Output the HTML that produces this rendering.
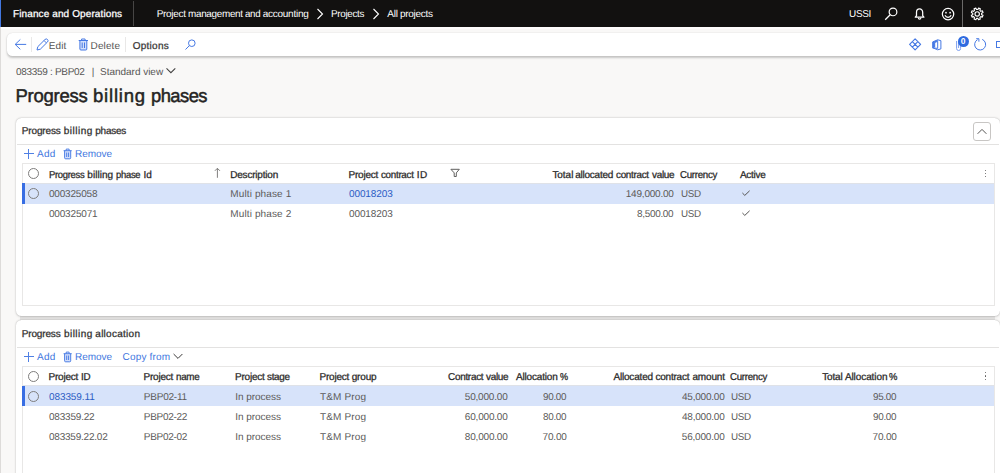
<!DOCTYPE html>
<html><head><meta charset="utf-8"><title>Progress billing phases</title>
<style>
html,body{margin:0;padding:0;}
body{text-rendering:geometricPrecision;width:1000px;height:473px;overflow:hidden;position:relative;background:#f9f8f7;font-family:"Liberation Sans",sans-serif;}
.a{position:absolute;}
.t{position:absolute;white-space:pre;}
svg{position:absolute;overflow:visible;}
.card{position:absolute;background:#fff;border-radius:5.500px;box-sizing:border-box;box-shadow:0 0 1.500px rgba(0,0,0,.20),0 .5px 2.500px rgba(0,0,0,.14);}
.grid{position:absolute;background:#fff;border:1px solid #e8e7e6;box-sizing:border-box;}
.sel{position:absolute;background:#d7e3fa;}
.hl{position:absolute;background:#e3e2e1;height:1px;}
.radio{position:absolute;width:11px;height:11px;border:1px solid #7e7d7c;border-radius:50%;box-sizing:border-box;}
</style></head><body>
<!-- left strip -->
<div class="a" style="left:0;top:27px;width:1.300px;height:446px;background:#dddbd9"></div>
<!-- top bar -->
<div class="a" style="left:0;top:0;width:1000px;height:27px;background:#121110"></div>
<div class="a" style="left:0;top:0;width:1.400px;height:26.500px;background:#4277e0"></div>
<div class="a" style="left:133px;top:1px;width:1px;height:25px;background:#474645"></div>
<div class="a" style="left:962px;top:0;width:1px;height:27px;background:#6b6a69"></div>
<!-- breadcrumb chevrons -->
<svg style="left:316px;top:8px" width="8" height="12" viewBox="0 0 8 12"><path d="M1.5 1 L6.5 6 L1.5 11" fill="none" stroke="#fff" stroke-width="1.1"/></svg>
<svg style="left:372px;top:8px" width="8" height="12" viewBox="0 0 8 12"><path d="M1.5 1 L6.5 6 L1.5 11" fill="none" stroke="#fff" stroke-width="1.1"/></svg>
<!-- top right icons -->
<svg style="left:884px;top:7px" width="14" height="14" viewBox="0 0 14 14"><circle cx="9" cy="4.900" r="3.850" fill="none" stroke="#fff" stroke-width="1.200"/><path d="M6.200 7.700 L1.200 12.700" stroke="#fff" stroke-width="1.250" fill="none"/></svg>
<svg style="left:914px;top:7px" width="12" height="14" viewBox="0 0 12 14"><path d="M1.300 10.200 L2.500 8.700 V5.400 A3.100 3.500 0 0 1 8.700 5.400 V8.700 L9.900 10.200 Z" fill="none" stroke="#fff" stroke-width="1.250" stroke-linejoin="round"/><path d="M4.300 10.800 a1.300 1.300 0 0 0 2.600 0" fill="none" stroke="#fff" stroke-width="1.100"/></svg>
<svg style="left:941px;top:7px" width="14" height="14" viewBox="0 0 14 14"><circle cx="7.050" cy="7.100" r="5.700" fill="none" stroke="#fff" stroke-width="1.250"/><circle cx="5" cy="5.700" r=".85" fill="#fff"/><circle cx="9.100" cy="5.700" r=".85" fill="#fff"/><path d="M4 8.300 A3.300 3.300 0 0 0 10.100 8.300" fill="none" stroke="#fff" stroke-width="1.150"/></svg>
<svg style="left:970px;top:7px" width="14" height="14" viewBox="0 0 14 14"><path d="M13.03 8.35 L12.32 10.08 L10.84 9.60 L9.85 10.59 L10.33 12.07 L8.60 12.78 L7.90 11.39 L6.50 11.39 L5.80 12.78 L4.07 12.07 L4.55 10.59 L3.56 9.60 L2.08 10.08 L1.37 8.35 L2.76 7.65 L2.76 6.25 L1.37 5.55 L2.08 3.82 L3.56 4.30 L4.55 3.31 L4.07 1.83 L5.80 1.12 L6.50 2.51 L7.90 2.51 L8.60 1.12 L10.33 1.83 L9.85 3.31 L10.84 4.30 L12.32 3.82 L13.03 5.55 L11.64 6.25 L11.64 7.65 Z" fill="none" stroke="#fff" stroke-width="1.150" stroke-linejoin="round"/><circle cx="7.200" cy="6.950" r="2.200" fill="none" stroke="#fff" stroke-width="1.150"/></svg>

<!-- action toolbar -->
<div class="a" style="left:1.300px;top:27px;width:999px;height:1.500px;background:rgba(255,255,255,.75)"></div>
<div class="a" style="left:7.300px;top:32.800px;width:1010px;height:23.600px;background:#fff;border-radius:5.500px;box-shadow:0 1.300px 2.200px rgba(0,0,0,.20),0 0 1.500px rgba(0,0,0,.10)"></div>
<div class="a" style="left:31px;top:37px;width:1px;height:15px;background:#e9e8e7"></div>
<div class="a" style="left:125px;top:37px;width:1px;height:15px;background:#e9e8e7"></div>
<!-- back arrow -->
<svg style="left:14px;top:39px" width="14" height="12" viewBox="0 0 14 12"><path d="M12.200 5.400 H1.200 M6.300 0.500 L1.200 5.400 L6.300 10.300" fill="none" stroke="#4679e4" stroke-width="1"/></svg>
<!-- pencil -->
<svg style="left:36px;top:38px" width="13" height="13" viewBox="0 0 13 13"><path d="M1 12 L1.800 8.700 L9 1.500 A1.300 1.300 0 0 1 11.500 4 L4.300 11.200 Z M8 2.500 L10.500 5" fill="none" stroke="#4679e4" stroke-width="1"/></svg>
<!-- trash -->
<svg style="left:78px;top:38px" width="11" height="13" viewBox="0 0 11 13"><path d="M1.900 2.500 V11 a1 1 0 0 0 1 1 H7.800 a1 1 0 0 0 1 -1 V2.500 Z" fill="#d3dffb" stroke="none"/><path d="M0.700 2.500 H10 M3.600 2.500 V1 H7.100 V2.500 M1.900 2.500 V11 a1 1 0 0 0 1 1 H7.800 a1 1 0 0 0 1 -1 V2.500 M4.200 4.500 V10 M6.500 4.500 V10" fill="none" stroke="#4679e4" stroke-width="1"/></svg>
<!-- search small -->
<svg style="left:185px;top:39px" width="11" height="11" viewBox="0 0 11 11"><circle cx="6.800" cy="4.200" r="3.300" fill="none" stroke="#4679e4" stroke-width="1"/><path d="M4.400 6.600 L0.500 10.500" stroke="#4679e4" stroke-width="1" fill="none"/></svg>
<!-- right toolbar icons -->
<svg style="left:909px;top:38px" width="12" height="12" viewBox="0 0 12 12"><g transform="translate(0.1 0.4)"><path d="M6 .5 L11.500 6 L6 11.500 L.5 6 Z M3.250 3.250 L8.750 8.750 M8.750 3.250 L3.250 8.750" fill="none" stroke="#4679e4" stroke-width="1.150" stroke-linejoin="round"/></g></svg>
<svg style="left:932px;top:39px" width="10" height="11" viewBox="0 0 10 11"><g transform="translate(0.1 0.3)"><path d="M.6 2.600 L5.600 .5 L8.800 1.400 V9.600 L5.600 10.500 L.6 8.500 L5.600 9.100 V2 L2.600 3.200 V7.600 L.6 8.500 Z" fill="none" stroke="#4679e4" stroke-width="1" stroke-linejoin="round"/><path d="M.6 2.600 L5.600 .5 V2 L2.600 3.200 V7.600 L.6 8.500 Z" fill="#4679e4"/></g></svg>
<svg style="left:955px;top:39px" width="8" height="13" viewBox="0 0 8 13"><path d="M1.600 2 V9.500 A2 2 0 0 0 5.600 9.500 V2.500 M3.600 3 V9 " fill="none" stroke="#7d9fee" stroke-width="1"/></svg>
<div class="a" style="left:957.500px;top:36px;width:11px;height:11px;border-radius:50%;background:#2f6be0"></div>
<div class="t" style="left:960.700px;top:37px;font-size:8.500px;line-height:9px;color:#fff;font-weight:700">0</div>
<svg style="left:974px;top:38px" width="13" height="13" viewBox="0 0 13 13"><path d="M8.21 1.40 A5.5 5.5 0 1 1 3.57 1.64" fill="none" stroke="#4679e4" stroke-width="1"/><path d="M2.200 .7 H4.900 V3.700" fill="none" stroke="#4679e4" stroke-width="1"/></svg>
<div class="a" style="left:996px;top:41.300px;width:8px;height:6.800px;border:1.200px solid #4679e4;box-sizing:border-box"></div>

<!-- standard view chevron -->
<svg style="left:165px;top:67px" width="10" height="7" viewBox="0 0 10 7"><g transform="translate(0.9 0.4)"><path d="M.6 1 L5 5.300 L9.400 1" fill="none" stroke="#424140" stroke-width="1.050"/></g></svg>

<!-- CARD 1 -->
<div class="a" style="left:20px;top:314px;width:975px;height:8px;background:#e6e5e4"></div>
<div class="card" style="left:15.500px;top:118px;width:984.200px;height:198.200px"></div>
<div class="hl" style="left:17px;top:144px;width:982px"></div>
<div class="a" style="left:973px;top:122px;width:18px;height:19px;border:1px solid #c8c6c4;border-radius:3px;box-sizing:border-box;background:#fff"></div>
<svg style="left:977px;top:128px" width="10" height="7" viewBox="0 0 10 7"><path d="M.6 5.800 L5 1.400 L9.400 5.800" fill="none" stroke="#555453" stroke-width="1"/></svg>
<!-- card1 toolbar icons -->
<div class="a" style="left:28px;top:148.500px;width:1px;height:10px;background:#5080e4"></div><div class="a" style="left:23.500px;top:153px;width:10px;height:1px;background:#5080e4"></div>
<svg style="left:63px;top:148px" width="10" height="12" viewBox="0 0 10 12"><path d="M1.600 2.700 V9.800 a1 1 0 0 0 1 1 H6.700 a1 1 0 0 0 1 -1 V2.700 Z" fill="#d3dffb" stroke="none"/><path d="M0.600 2.700 H8.700 M3.200 2.700 V1.100 H6.100 V2.700 M1.600 2.700 V9.800 a1 1 0 0 0 1 1 H6.700 a1 1 0 0 0 1 -1 V2.700 M3.700 4.500 V9 M5.600 4.500 V9" fill="none" stroke="#4679e4" stroke-width=".95"/></svg>
<div class="grid" style="left:22px;top:163px;width:973px;height:143px"></div>
<div class="sel" style="left:23px;top:183.600px;width:971px;height:20.200px"></div><div class="a" style="left:23px;top:183px;width:971px;height:1.100px;background:#dfe2e8"></div>
<div class="a" style="left:22.300px;top:183.400px;width:2.400px;height:20.400px;background:#376de3"></div>
<div class="radio" style="left:28px;top:168px"></div>
<div class="radio" style="left:28px;top:188px"></div>
<!-- sort arrow -->
<svg style="left:0;top:0" width="1" height="1"><path d="M217.400 168.300 V177.800 M214.900 170.800 L217.400 168.300 L219.900 170.800" fill="none" stroke="#807f7e" stroke-width="1"/></svg>
<!-- filter -->
<svg style="left:0;top:0" width="1" height="1"><path d="M450.900 169.300 H459.300 L456.300 172.900 V176.500 H454.200 V172.900 Z" fill="none" stroke="#605f5e" stroke-width="1" stroke-linejoin="round"/></svg>
<!-- dots -->
<div class="a" style="left:985px;top:169.500px;width:1.300px;height:1.300px;background:#555453;border-radius:50%"></div>
<div class="a" style="left:985px;top:172.800px;width:1.300px;height:1.300px;background:#555453;border-radius:50%"></div>
<div class="a" style="left:985px;top:176.100px;width:1.300px;height:1.300px;background:#555453;border-radius:50%"></div>
<!-- checks -->
<svg style="left:742px;top:190px" width="8" height="6" viewBox="0 0 8 6"><path d="M.4 3 L2.800 5.400 L7.600 .8" fill="none" stroke="#555453" stroke-width="1"/></svg>
<svg style="left:742px;top:210px" width="8" height="6" viewBox="0 0 8 6"><path d="M.4 3 L2.800 5.400 L7.600 .8" fill="none" stroke="#555453" stroke-width="1"/></svg>

<!-- CARD 2 -->
<div class="card" style="left:15.500px;top:320.200px;width:984.200px;height:200px"></div>
<div class="hl" style="left:17px;top:347px;width:982px"></div>
<div class="a" style="left:28px;top:351.500px;width:1px;height:10px;background:#5080e4"></div><div class="a" style="left:23.500px;top:356px;width:10px;height:1px;background:#5080e4"></div>
<svg style="left:63px;top:351px" width="10" height="12" viewBox="0 0 10 12"><path d="M1.600 2.700 V9.800 a1 1 0 0 0 1 1 H6.700 a1 1 0 0 0 1 -1 V2.700 Z" fill="#d3dffb" stroke="none"/><path d="M0.600 2.700 H8.700 M3.200 2.700 V1.100 H6.100 V2.700 M1.600 2.700 V9.800 a1 1 0 0 0 1 1 H6.700 a1 1 0 0 0 1 -1 V2.700 M3.700 4.500 V9 M5.600 4.500 V9" fill="none" stroke="#4679e4" stroke-width=".95"/></svg>
<svg style="left:173px;top:353px" width="10" height="7" viewBox="0 0 10 7"><path d="M.6 1 L5 5.400 L9.400 1" fill="none" stroke="#3b3a39" stroke-width="1"/></svg>
<div class="grid" style="left:22px;top:366px;width:973px;height:160px"></div>
<div class="sel" style="left:23px;top:386px;width:971px;height:20.300px"></div><div class="a" style="left:23px;top:385.100px;width:971px;height:1.100px;background:#dfe2e8"></div>
<div class="a" style="left:22.300px;top:385.800px;width:2.400px;height:20.500px;background:#376de3"></div>
<div class="radio" style="left:28px;top:371px"></div>
<div class="radio" style="left:28px;top:391px"></div>
<div class="a" style="left:985px;top:372px;width:1.300px;height:1.300px;background:#555453;border-radius:50%"></div>
<div class="a" style="left:985px;top:375.300px;width:1.300px;height:1.300px;background:#555453;border-radius:50%"></div>
<div class="a" style="left:985px;top:378.600px;width:1.300px;height:1.300px;background:#555453;border-radius:50%"></div>

<span class="t" style="left:13.01px;top:9px;font-size:10px;line-height:12px;letter-spacing:0.111px;color:#ffffff;-webkit-text-stroke:0.28px #ffffff;">Finance and Operations</span>
<span class="t" style="left:156.65px;top:9px;font-size:10px;line-height:12px;letter-spacing:-0.277px;color:#ffffff;">Project</span>
<span class="t" style="left:188.16px;top:9px;font-size:10px;line-height:12px;letter-spacing:-0.3px;color:#ffffff;transform:scaleX(0.9887);transform-origin:0 0;">management</span>
<span class="t" style="left:244.76px;top:9px;font-size:10px;line-height:12px;letter-spacing:-0.3px;color:#ffffff;transform:scaleX(0.9732);transform-origin:0 0;">and</span>
<span class="t" style="left:262.65px;top:9px;font-size:10px;line-height:12px;letter-spacing:-0.247px;color:#ffffff;">accounting</span>
<span class="t" style="left:330.96px;top:9px;font-size:10px;line-height:12px;letter-spacing:-0.3px;color:#ffffff;transform:scaleX(0.9831);transform-origin:0 0;">Projects</span>
<span class="t" style="left:387.34px;top:9px;font-size:10px;line-height:12px;letter-spacing:-0.295px;color:#ffffff;">All projects</span>
<span class="t" style="left:848.89px;top:9px;font-size:10px;line-height:12px;letter-spacing:-0.3px;color:#ffffff;transform:scaleX(0.9958);transform-origin:0 0;">USSI</span>
<span class="t" style="left:48.70px;top:41px;font-size:10px;line-height:12px;letter-spacing:0.147px;color:#575655;">Edit</span>
<span class="t" style="left:90.60px;top:41px;font-size:10px;line-height:12px;letter-spacing:0.101px;color:#575655;">Delete</span>
<span class="t" style="left:132.69px;top:41px;font-size:10px;line-height:12px;letter-spacing:0.263px;color:#3a3938;-webkit-text-stroke:0.28px #3a3938;">Options</span>
<span class="t" style="left:16.08px;top:67px;font-size:10px;line-height:12px;letter-spacing:-0.3px;color:#575655;transform:scaleX(0.9997);transform-origin:0 0;">083359 : PBP02</span>
<span class="t" style="left:91.80px;top:67px;font-size:10px;line-height:12px;letter-spacing:0px;color:#575655;">|</span>
<span class="t" style="left:100.09px;top:67px;font-size:10px;line-height:12px;letter-spacing:-0.027px;color:#575655;">Standard view</span>
<span class="t" style="left:15.52px;top:85px;font-size:18.5px;line-height:22px;letter-spacing:-0.246px;color:#252423;-webkit-text-stroke:0.48px #252423;">Progress</span>
<span class="t" style="left:93.00px;top:85px;font-size:18.5px;line-height:22px;letter-spacing:0.795px;color:#252423;-webkit-text-stroke:0.48px #252423;">billing</span>
<span class="t" style="left:150.87px;top:85px;font-size:18.5px;line-height:22px;letter-spacing:-0.555px;color:#252423;-webkit-text-stroke:0.48px #252423;transform:scaleX(0.9933);transform-origin:0 0;">phases</span>
<span class="t" style="left:21.81px;top:126px;font-size:10px;line-height:12px;letter-spacing:-0.151px;color:#323130;-webkit-text-stroke:0.28px #323130;">Progress</span>
<span class="t" style="left:63.77px;top:126px;font-size:10px;line-height:12px;letter-spacing:0.507px;color:#323130;-webkit-text-stroke:0.28px #323130;">billing</span>
<span class="t" style="left:95.23px;top:126px;font-size:10px;line-height:12px;letter-spacing:-0.23px;color:#323130;-webkit-text-stroke:0.28px #323130;">phases</span>
<span class="t" style="left:37.04px;top:149px;font-size:10px;line-height:12px;letter-spacing:0.282px;color:#4377e0;">Add</span>
<span class="t" style="left:74.95px;top:149px;font-size:10px;line-height:12px;letter-spacing:-0.004px;color:#4377e0;">Remove</span>
<span class="t" style="left:48.65px;top:170px;font-size:10px;line-height:12px;letter-spacing:-0.3px;color:#2b2a29;-webkit-text-stroke:0.28px #2b2a29;transform:scaleX(0.9420);transform-origin:0 0;">Progress</span>
<span class="t" style="left:87.37px;top:170px;font-size:10px;line-height:12px;letter-spacing:0.04px;color:#2b2a29;-webkit-text-stroke:0.28px #2b2a29;">billing</span>
<span class="t" style="left:116.36px;top:170px;font-size:10px;line-height:12px;letter-spacing:-0.3px;color:#2b2a29;-webkit-text-stroke:0.28px #2b2a29;transform:scaleX(0.9429);transform-origin:0 0;">phase</span>
<span class="t" style="left:143.53px;top:170px;font-size:10px;line-height:12px;letter-spacing:-0.059px;color:#2b2a29;-webkit-text-stroke:0.28px #2b2a29;">Id</span>
<span class="t" style="left:230.21px;top:170px;font-size:10px;line-height:12px;letter-spacing:-0.196px;color:#2b2a29;-webkit-text-stroke:0.28px #2b2a29;">Description</span>
<span class="t" style="left:348.61px;top:170px;font-size:10px;line-height:12px;letter-spacing:-0.245px;color:#2b2a29;-webkit-text-stroke:0.28px #2b2a29;">Project</span>
<span class="t" style="left:380.92px;top:170px;font-size:10px;line-height:12px;letter-spacing:-0.3px;color:#2b2a29;-webkit-text-stroke:0.28px #2b2a29;transform:scaleX(0.9819);transform-origin:0 0;">contract</span>
<span class="t" style="left:416.83px;top:170px;font-size:10px;line-height:12px;letter-spacing:0.418px;color:#2b2a29;-webkit-text-stroke:0.28px #2b2a29;">ID</span>
<span class="t" style="left:552.39px;top:170px;font-size:10px;line-height:12px;letter-spacing:-0.035px;color:#2b2a29;-webkit-text-stroke:0.28px #2b2a29;">Total</span>
<span class="t" style="left:575.20px;top:170px;font-size:10px;line-height:12px;letter-spacing:-0.231px;color:#2b2a29;-webkit-text-stroke:0.28px #2b2a29;">allocated</span>
<span class="t" style="left:616.02px;top:170px;font-size:10px;line-height:12px;letter-spacing:-0.3px;color:#2b2a29;-webkit-text-stroke:0.28px #2b2a29;transform:scaleX(0.9880);transform-origin:0 0;">contract</span>
<span class="t" style="left:652.01px;top:170px;font-size:10px;line-height:12px;letter-spacing:-0.3px;color:#2b2a29;-webkit-text-stroke:0.28px #2b2a29;transform:scaleX(0.9969);transform-origin:0 0;">value</span>
<span class="t" style="left:680.16px;top:170px;font-size:10px;line-height:12px;letter-spacing:-0.3px;color:#2b2a29;-webkit-text-stroke:0.28px #2b2a29;transform:scaleX(0.9726);transform-origin:0 0;">Currency</span>
<span class="t" style="left:739.90px;top:170px;font-size:10px;line-height:12px;letter-spacing:-0.262px;color:#2b2a29;-webkit-text-stroke:0.28px #2b2a29;">Active</span>
<span class="t" style="left:48.98px;top:189px;font-size:10px;line-height:12px;letter-spacing:-0.19px;color:#5b5a59;">000325058</span>
<span class="t" style="left:230.35px;top:189px;font-size:10px;line-height:12px;letter-spacing:0.118px;color:#5b5a59;">Multi phase 1</span>
<span class="t" style="left:348.98px;top:189px;font-size:10px;line-height:12px;letter-spacing:-0.106px;color:#2b5cc4;">00018203</span>
<span class="t" style="left:625.75px;top:189px;font-size:10px;line-height:12px;letter-spacing:-0.209px;color:#5b5a59;">149,000.00</span>
<span class="t" style="left:680.51px;top:189px;font-size:10px;line-height:12px;letter-spacing:-0.3px;color:#5b5a59;transform:scaleX(0.9800);transform-origin:0 0;">USD</span>
<span class="t" style="left:48.98px;top:209px;font-size:10px;line-height:12px;letter-spacing:-0.179px;color:#5b5a59;">000325071</span>
<span class="t" style="left:230.35px;top:209px;font-size:10px;line-height:12px;letter-spacing:0.118px;color:#5b5a59;">Multi phase 2</span>
<span class="t" style="left:348.98px;top:209px;font-size:10px;line-height:12px;letter-spacing:-0.106px;color:#5b5a59;">00018203</span>
<span class="t" style="left:637.36px;top:209px;font-size:10px;line-height:12px;letter-spacing:-0.3px;color:#5b5a59;transform:scaleX(0.9946);transform-origin:0 0;">8,500.00</span>
<span class="t" style="left:680.51px;top:209px;font-size:10px;line-height:12px;letter-spacing:-0.3px;color:#5b5a59;transform:scaleX(0.9800);transform-origin:0 0;">USD</span>
<span class="t" style="left:21.81px;top:329px;font-size:10px;line-height:12px;letter-spacing:-0.165px;color:#323130;-webkit-text-stroke:0.28px #323130;">Progress</span>
<span class="t" style="left:63.97px;top:329px;font-size:10px;line-height:12px;letter-spacing:0.457px;color:#323130;-webkit-text-stroke:0.28px #323130;">billing</span>
<span class="t" style="left:95.30px;top:329px;font-size:10px;line-height:12px;letter-spacing:0.267px;color:#323130;-webkit-text-stroke:0.28px #323130;">allocation</span>
<span class="t" style="left:37.04px;top:352px;font-size:10px;line-height:12px;letter-spacing:0.282px;color:#4377e0;">Add</span>
<span class="t" style="left:74.95px;top:352px;font-size:10px;line-height:12px;letter-spacing:-0.004px;color:#4377e0;">Remove</span>
<span class="t" style="left:122.49px;top:352px;font-size:10px;line-height:12px;letter-spacing:0.185px;color:#4377e0;">Copy from</span>
<span class="t" style="left:48.61px;top:372px;font-size:10px;line-height:12px;letter-spacing:-0.245px;color:#2b2a29;-webkit-text-stroke:0.28px #2b2a29;">Project</span>
<span class="t" style="left:80.55px;top:372px;font-size:10px;line-height:12px;letter-spacing:-0.3px;color:#2b2a29;-webkit-text-stroke:0.28px #2b2a29;transform:scaleX(0.9793);transform-origin:0 0;">ID</span>
<span class="t" style="left:143.61px;top:372px;font-size:10px;line-height:12px;letter-spacing:-0.245px;color:#2b2a29;-webkit-text-stroke:0.28px #2b2a29;">Project</span>
<span class="t" style="left:175.53px;top:372px;font-size:10px;line-height:12px;letter-spacing:-0.3px;color:#2b2a29;-webkit-text-stroke:0.28px #2b2a29;transform:scaleX(0.9839);transform-origin:0 0;">name</span>
<span class="t" style="left:235.11px;top:372px;font-size:10px;line-height:12px;letter-spacing:-0.245px;color:#2b2a29;-webkit-text-stroke:0.28px #2b2a29;">Project</span>
<span class="t" style="left:267.07px;top:372px;font-size:10px;line-height:12px;letter-spacing:-0.3px;color:#2b2a29;-webkit-text-stroke:0.28px #2b2a29;transform:scaleX(0.9910);transform-origin:0 0;">stage</span>
<span class="t" style="left:319.61px;top:372px;font-size:10px;line-height:12px;letter-spacing:-0.245px;color:#2b2a29;-webkit-text-stroke:0.28px #2b2a29;">Project</span>
<span class="t" style="left:351.72px;top:372px;font-size:10px;line-height:12px;letter-spacing:-0.165px;color:#2b2a29;-webkit-text-stroke:0.28px #2b2a29;">group</span>
<span class="t" style="left:447.65px;top:372px;font-size:10px;line-height:12px;letter-spacing:-0.3px;color:#2b2a29;-webkit-text-stroke:0.28px #2b2a29;transform:scaleX(0.9974);transform-origin:0 0;">Contract</span>
<span class="t" style="left:485.91px;top:372px;font-size:10px;line-height:12px;letter-spacing:-0.3px;color:#2b2a29;-webkit-text-stroke:0.28px #2b2a29;transform:scaleX(0.9969);transform-origin:0 0;">value</span>
<span class="t" style="left:515.90px;top:372px;font-size:10px;line-height:12px;letter-spacing:-0.166px;color:#2b2a29;-webkit-text-stroke:0.28px #2b2a29;">Allocation</span>
<span class="t" style="left:560.06px;top:372px;font-size:10px;line-height:12px;letter-spacing:0px;color:#2b2a29;-webkit-text-stroke:0.28px #2b2a29;transform:scaleX(0.9093);transform-origin:0 0;">%</span>
<span class="t" style="left:613.40px;top:372px;font-size:10px;line-height:12px;letter-spacing:-0.181px;color:#2b2a29;-webkit-text-stroke:0.28px #2b2a29;">Allocated</span>
<span class="t" style="left:655.51px;top:372px;font-size:10px;line-height:12px;letter-spacing:-0.229px;color:#2b2a29;-webkit-text-stroke:0.28px #2b2a29;">contract</span>
<span class="t" style="left:692.40px;top:372px;font-size:10px;line-height:12px;letter-spacing:-0.143px;color:#2b2a29;-webkit-text-stroke:0.28px #2b2a29;">amount</span>
<span class="t" style="left:730.46px;top:372px;font-size:10px;line-height:12px;letter-spacing:-0.3px;color:#2b2a29;-webkit-text-stroke:0.28px #2b2a29;transform:scaleX(0.9700);transform-origin:0 0;">Currency</span>
<span class="t" style="left:822.29px;top:372px;font-size:10px;line-height:12px;letter-spacing:-0.185px;color:#2b2a29;-webkit-text-stroke:0.28px #2b2a29;">Total</span>
<span class="t" style="left:844.90px;top:372px;font-size:10px;line-height:12px;letter-spacing:-0.088px;color:#2b2a29;-webkit-text-stroke:0.28px #2b2a29;">Allocation</span>
<span class="t" style="left:889.35px;top:372px;font-size:10px;line-height:12px;letter-spacing:0px;color:#2b2a29;-webkit-text-stroke:0.28px #2b2a29;transform:scaleX(0.9447);transform-origin:0 0;">%</span>
<span class="t" style="left:48.98px;top:392px;font-size:10px;line-height:12px;letter-spacing:-0.089px;color:#2b5cc4;">083359.11</span>
<span class="t" style="left:143.85px;top:392px;font-size:10px;line-height:12px;letter-spacing:-0.231px;color:#5b5a59;">PBP02-11</span>
<span class="t" style="left:235.22px;top:392px;font-size:10px;line-height:12px;letter-spacing:-0.047px;color:#5b5a59;">In process</span>
<span class="t" style="left:320.02px;top:392px;font-size:10px;line-height:12px;letter-spacing:0.147px;color:#5b5a59;">T&amp;M Prog</span>
<span class="t" style="left:464.76px;top:392px;font-size:10px;line-height:12px;letter-spacing:-0.183px;color:#5b5a59;">50,000.00</span>
<span class="t" style="left:543.39px;top:392px;font-size:10px;line-height:12px;letter-spacing:-0.3px;color:#5b5a59;transform:scaleX(0.9864);transform-origin:0 0;">90.00</span>
<span class="t" style="left:681.98px;top:392px;font-size:10px;line-height:12px;letter-spacing:-0.211px;color:#5b5a59;">45,000.00</span>
<span class="t" style="left:730.51px;top:392px;font-size:10px;line-height:12px;letter-spacing:-0.3px;color:#5b5a59;transform:scaleX(0.9800);transform-origin:0 0;">USD</span>
<span class="t" style="left:873.39px;top:392px;font-size:10px;line-height:12px;letter-spacing:-0.3px;color:#5b5a59;transform:scaleX(0.9864);transform-origin:0 0;">95.00</span>
<span class="t" style="left:48.98px;top:412px;font-size:10px;line-height:12px;letter-spacing:-0.202px;color:#5b5a59;">083359.22</span>
<span class="t" style="left:143.85px;top:412px;font-size:10px;line-height:12px;letter-spacing:-0.297px;color:#5b5a59;">PBP02-22</span>
<span class="t" style="left:235.22px;top:412px;font-size:10px;line-height:12px;letter-spacing:-0.047px;color:#5b5a59;">In process</span>
<span class="t" style="left:320.02px;top:412px;font-size:10px;line-height:12px;letter-spacing:0.147px;color:#5b5a59;">T&amp;M Prog</span>
<span class="t" style="left:464.86px;top:412px;font-size:10px;line-height:12px;letter-spacing:-0.196px;color:#5b5a59;">60,000.00</span>
<span class="t" style="left:543.37px;top:412px;font-size:10px;line-height:12px;letter-spacing:-0.3px;color:#5b5a59;transform:scaleX(0.9873);transform-origin:0 0;">80.00</span>
<span class="t" style="left:681.98px;top:412px;font-size:10px;line-height:12px;letter-spacing:-0.211px;color:#5b5a59;">48,000.00</span>
<span class="t" style="left:730.51px;top:412px;font-size:10px;line-height:12px;letter-spacing:-0.3px;color:#5b5a59;transform:scaleX(0.9800);transform-origin:0 0;">USD</span>
<span class="t" style="left:873.39px;top:412px;font-size:10px;line-height:12px;letter-spacing:-0.3px;color:#5b5a59;transform:scaleX(0.9864);transform-origin:0 0;">90.00</span>
<span class="t" style="left:48.98px;top:432px;font-size:10px;line-height:12px;letter-spacing:-0.219px;color:#5b5a59;">083359.22.02</span>
<span class="t" style="left:143.85px;top:432px;font-size:10px;line-height:12px;letter-spacing:-0.297px;color:#5b5a59;">PBP02-02</span>
<span class="t" style="left:235.22px;top:432px;font-size:10px;line-height:12px;letter-spacing:-0.047px;color:#5b5a59;">In process</span>
<span class="t" style="left:320.02px;top:432px;font-size:10px;line-height:12px;letter-spacing:0.147px;color:#5b5a59;">T&amp;M Prog</span>
<span class="t" style="left:464.86px;top:432px;font-size:10px;line-height:12px;letter-spacing:-0.195px;color:#5b5a59;">80,000.00</span>
<span class="t" style="left:542.50px;top:432px;font-size:10px;line-height:12px;letter-spacing:-0.157px;color:#5b5a59;">70.00</span>
<span class="t" style="left:681.76px;top:432px;font-size:10px;line-height:12px;letter-spacing:-0.183px;color:#5b5a59;">56,000.00</span>
<span class="t" style="left:730.51px;top:432px;font-size:10px;line-height:12px;letter-spacing:-0.3px;color:#5b5a59;transform:scaleX(0.9800);transform-origin:0 0;">USD</span>
<span class="t" style="left:872.50px;top:432px;font-size:10px;line-height:12px;letter-spacing:-0.157px;color:#5b5a59;">70.00</span>
</body></html>
